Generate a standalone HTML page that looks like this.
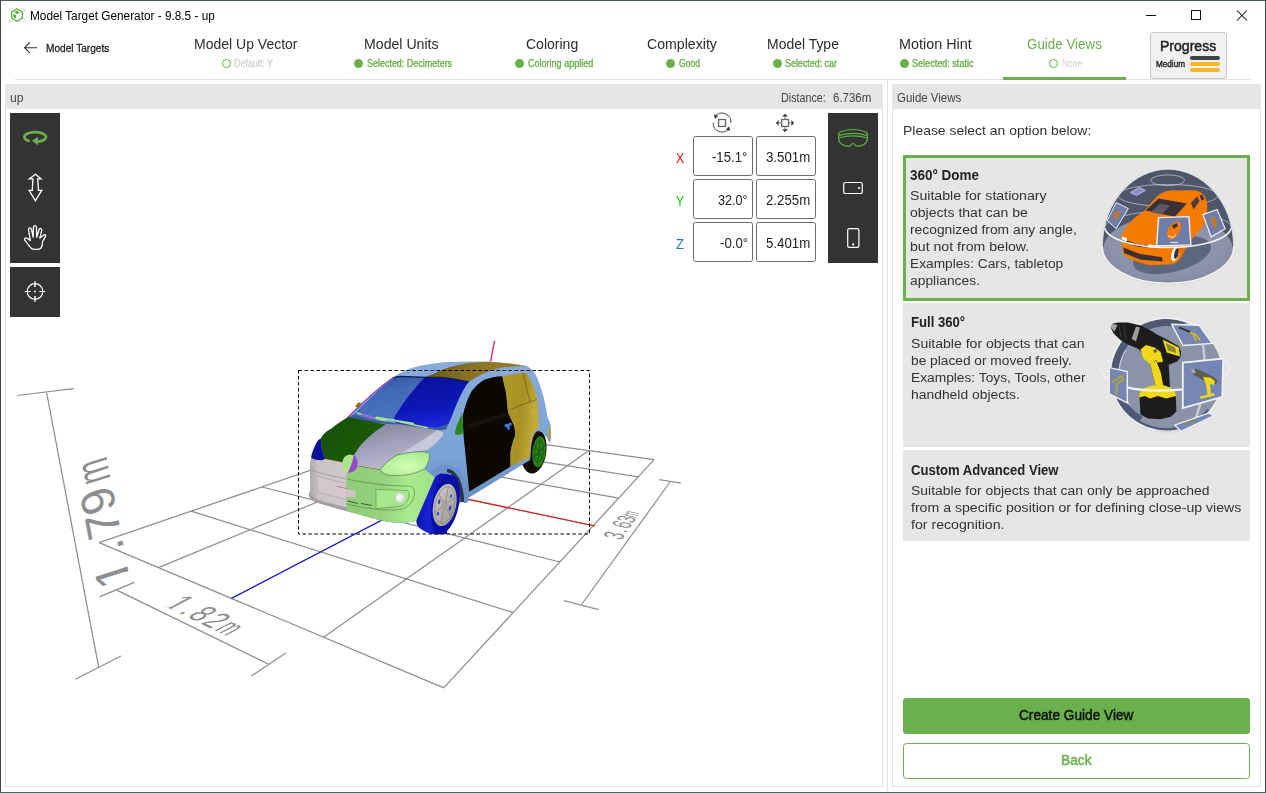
<!DOCTYPE html>
<html lang="en"><head><meta charset="utf-8"><title>Model Target Generator - 9.8.5 - up</title>
<style>
html,body{margin:0;padding:0;background:#fff;}
body{width:1266px;height:793px;overflow:hidden;font-family:"Liberation Sans",sans-serif;}
#win{position:relative;width:1266px;height:793px;overflow:hidden;background:#fff;}
#win>div,#win>svg,.t{position:absolute;}
.t{white-space:nowrap;transform-origin:0 0;display:block;}
.bd{background:#46525a;}
.hdr{background:#e6e6e5;}
.ln{background:#e2e2e2;}
.tb{background:#333333;}
.inp{border:1px solid #6a6a6a;border-radius:2.5px;box-sizing:border-box;background:#fff;}
.card{background:#e6e6e5;}
.dot{border-radius:50%;box-sizing:border-box;}
.dim{white-space:nowrap;font-family:"Liberation Sans",sans-serif;}
.dim i{position:absolute;background:#fff;display:block;}

</style></head>
<body>
<div id="win">
<!-- window border -->
<div class="bd" style="left:0;top:0;width:1266px;height:1px;background:#4a5860"></div>
<div class="bd" style="left:0;top:0;width:1px;height:793px;background:#3c4a44"></div>
<div class="bd" style="left:1265px;top:0;width:1px;height:793px;background:#2a5566"></div>
<div class="bd" style="left:0;top:792px;width:1266px;height:1px;background:#50606a"></div>
<!-- nav separator -->
<div class="ln" style="left:15px;top:79px;width:1236px;height:1px"></div>
<div style="left:1003px;top:77px;width:123px;height:3px;background:#6ab04c"></div>
<!-- progress button -->
<div style="left:1150px;top:32px;width:77px;height:47px;box-sizing:border-box;border:1px solid #c9c9c9;border-radius:3px;background:#f1f1f1"></div>
<div style="left:1190px;top:56px;width:30px;height:4px;border-radius:2px;background:#3c4043"></div>
<div style="left:1190px;top:62px;width:30px;height:4px;border-radius:2px;background:#fdb823"></div>
<div style="left:1190px;top:68px;width:30px;height:4px;border-radius:2px;background:#fdb823"></div>
<!-- status dots -->
<div class="dot" style="left:221.5px;top:59.3px;width:9px;height:9px;border:1.2px solid #6ab04c"></div>
<div class="dot" style="left:354.3px;top:59.3px;width:9px;height:9px;background:#6ab04c"></div>
<div class="dot" style="left:515px;top:59.3px;width:9px;height:9px;background:#6ab04c"></div>
<div class="dot" style="left:666px;top:59.3px;width:9px;height:9px;background:#6ab04c"></div>
<div class="dot" style="left:772.5px;top:59.3px;width:9px;height:9px;background:#6ab04c"></div>
<div class="dot" style="left:899.5px;top:59.3px;width:9px;height:9px;background:#6ab04c"></div>
<div class="dot" style="left:1049.4px;top:59.3px;width:9px;height:9px;border:1.2px solid #6ab04c"></div>
<!-- left panel -->
<div style="left:5px;top:84px;width:878px;height:703px;box-sizing:border-box;border:1px solid #e2e2e2;background:#fff"></div>
<div class="hdr" style="left:5px;top:84px;width:878px;height:25px"></div>
<!-- splitter -->
<div class="ln" style="left:887px;top:79px;width:1px;height:713px"></div>
<!-- right panel -->
<div style="left:892px;top:84px;width:369px;height:703px;box-sizing:border-box;border:1px solid #e2e2e2;background:#fff"></div>
<div class="hdr" style="left:892px;top:84px;width:369px;height:25px"></div>
<!-- toolbars -->
<div class="tb" style="left:10px;top:113px;width:50px;height:150px"></div>
<div class="tb" style="left:10px;top:267px;width:50px;height:50px"></div>
<div class="tb" style="left:828px;top:113px;width:50px;height:150px"></div>
<!-- inputs -->
<div class="inp" style="left:693px;top:136px;width:60px;height:40px"></div>
<div class="inp" style="left:756px;top:136px;width:60px;height:40px"></div>
<div class="inp" style="left:693px;top:179px;width:60px;height:40px"></div>
<div class="inp" style="left:756px;top:179px;width:60px;height:40px"></div>
<div class="inp" style="left:693px;top:222px;width:60px;height:40px"></div>
<div class="inp" style="left:756px;top:222px;width:60px;height:40px"></div>
<!-- cards -->
<div class="card" style="left:903px;top:155px;width:347px;height:146px;box-sizing:border-box;border:3px solid #6ab04c"></div>
<div class="card" style="left:903px;top:303px;width:347px;height:144px"></div>
<div class="card" style="left:903px;top:450px;width:347px;height:91px"></div>
<!-- buttons -->
<div style="left:903px;top:698px;width:347px;height:36px;border-radius:3px;background:#6ab04c"></div>
<div style="left:903px;top:743px;width:347px;height:36px;box-sizing:border-box;border:1.3px solid #6ab04c;border-radius:3.5px;background:#fff"></div>

<svg style="left:0;top:0" width="1266" height="793" viewBox="0 0 1266 793">
<defs>
<style>
.g{stroke:#8e8e8e;stroke-width:1.25;fill:none}
.bl{stroke:#1414e0;stroke-width:1.1;fill:none}
.rd{stroke:#e81818;stroke-width:1.1;fill:none}
.dt{font-family:"Liberation Sans",sans-serif;fill:#8e8e8e}
</style>
</defs>

<g id="grid">
<line class="g" x1="99.2" y1="542.6" x2="432.2" y2="428.7"/>
<line class="g" x1="158.4" y1="567.6" x2="479.0" y2="435.3"/>
<line class="g" x1="231.4" y1="598.4" x2="531.0" y2="442.5"/>
<line class="g" x1="323.5" y1="637.3" x2="588.9" y2="450.6"/>
<line class="g" x1="443.7" y1="687.9" x2="654.1" y2="459.7"/>
<line class="g" x1="99.2" y1="542.6" x2="443.7" y2="687.9"/>
<line class="g" x1="191.2" y1="511.1" x2="513.1" y2="612.6"/>
<line class="g" x1="261.9" y1="487.0" x2="559.8" y2="562.0"/>
<line class="g" x1="317.8" y1="467.8" x2="593.3" y2="525.6"/>
<line class="g" x1="363.1" y1="452.3" x2="618.6" y2="498.2"/>
<line class="g" x1="400.6" y1="439.5" x2="638.3" y2="476.8"/>
<line class="g" x1="432.2" y1="428.7" x2="654.1" y2="459.7"/>
<line class="bl" x1="231.4" y1="598.4" x2="435.0" y2="492.4"/>
<line class="rd" x1="435.0" y1="492.4" x2="595.2" y2="526.0"/>
<line class="g" x1="46.7" y1="393.0" x2="98.6" y2="666.8"/>
<line class="g" x1="17.0" y1="395.5" x2="73.6" y2="388.7"/>
<line class="g" x1="75.4" y1="679.3" x2="121.0" y2="656.0"/>
<line class="g" x1="117.3" y1="590.4" x2="268.3" y2="664.0"/>
<line class="g" x1="99.4" y1="596.9" x2="134.3" y2="582.4"/>
<line class="g" x1="251.4" y1="676.0" x2="285.8" y2="653.0"/>
<line class="g" x1="670.0" y1="482.0" x2="581.6" y2="604.5"/>
<line class="g" x1="659.2" y1="479.7" x2="681.0" y2="483.1"/>
<line class="g" x1="564.0" y1="600.7" x2="598.6" y2="609.7"/>
</g>
<g id="car">
<defs>
<linearGradient id="gBody" x1="0" y1="0" x2="0" y2="1"><stop offset="0" stop-color="#86acdc"/><stop offset="0.6" stop-color="#7aa2d4"/><stop offset="1" stop-color="#5a82b8"/></linearGradient>
<linearGradient id="gRoof" x1="0" y1="0" x2="1" y2="0"><stop offset="0" stop-color="#6e5a18"/><stop offset="0.5" stop-color="#8c7424"/><stop offset="1" stop-color="#9c842c"/></linearGradient>
<linearGradient id="gWsL" x1="0" y1="0" x2="0.3" y2="1"><stop offset="0" stop-color="#2f4f98"/><stop offset="0.4" stop-color="#4068b4"/><stop offset="1" stop-color="#4a74c0"/></linearGradient>
<linearGradient id="gWsR" x1="0" y1="0" x2="0.2" y2="1"><stop offset="0" stop-color="#08109a"/><stop offset="0.7" stop-color="#0c18b8"/><stop offset="1" stop-color="#1a28d8"/></linearGradient>
<linearGradient id="gHoodG" x1="0" y1="0" x2="1" y2="0.4"><stop offset="0" stop-color="#17500a"/><stop offset="1" stop-color="#1c5c06"/></linearGradient>
<linearGradient id="gHoodS" x1="0.2" y1="0" x2="0.6" y2="1"><stop offset="0" stop-color="#86869c"/><stop offset="0.5" stop-color="#a4a4bc"/><stop offset="1" stop-color="#c0c0d6"/></linearGradient>
<radialGradient id="gHL" cx="0.55" cy="0.6" r="0.7"><stop offset="0" stop-color="#d4ffb4"/><stop offset="1" stop-color="#a4e888"/></radialGradient>
<linearGradient id="gBumpG" x1="0" y1="0" x2="1" y2="0"><stop offset="0" stop-color="#8ecc78"/><stop offset="0.4" stop-color="#94d27c"/><stop offset="0.7" stop-color="#aaea8e"/><stop offset="1" stop-color="#a2e286"/></linearGradient>
<linearGradient id="gBumpS" x1="0" y1="0" x2="1" y2="0"><stop offset="0" stop-color="#a8a4a4"/><stop offset="0.25" stop-color="#cac4c4"/><stop offset="1" stop-color="#cfc7c7"/></linearGradient>
<linearGradient id="gYel" x1="0" y1="0" x2="1" y2="0.3"><stop offset="0" stop-color="#b09828"/><stop offset="0.6" stop-color="#a89024"/><stop offset="1" stop-color="#c4ac3c"/></linearGradient>
<linearGradient id="gTire" x1="0" y1="0" x2="1" y2="0"><stop offset="0" stop-color="#0c14b0"/><stop offset="0.35" stop-color="#1822d4"/><stop offset="0.8" stop-color="#0c12ac"/><stop offset="1" stop-color="#0a0e9c"/></linearGradient>
<linearGradient id="gRim" x1="0" y1="0" x2="1" y2="1"><stop offset="0" stop-color="#d0ccc8"/><stop offset="1" stop-color="#9c9894"/></linearGradient>
</defs>
<!-- antenna -->
<line x1="490.6" y1="361.5" x2="494.6" y2="340.7" stroke="#e03070" stroke-width="1.4"/>
<!-- rear wheel -->
<ellipse cx="533.6" cy="450.6" rx="12.8" ry="23" transform="rotate(6 533.6 450.6)" fill="#140c04"/>
<ellipse cx="539" cy="451.8" rx="6.6" ry="15.6" transform="rotate(6 539 451.8)" fill="#2a8418"/>
<g transform="rotate(6 539 451.8)" stroke="#165a0c" stroke-width="1" fill="none"><ellipse cx="539" cy="451.8" rx="4.4" ry="11"/><line x1="539" y1="438" x2="539" y2="466"/><line x1="533.6" y1="445" x2="544.4" y2="459"/><line x1="533.6" y1="459" x2="544.4" y2="445"/></g>
<!-- body silhouette -->
<path id="bodyPath" d="M348,417 Q370.4,393.6 393.6,377 C400,372.5 408,369 414.8,367 C425,364.5 436,363 448,362 L470,361.5 L490,361.7 L510,363.5 C518,364.5 524,365.3 527.4,366.3 C532,369 535,373 537.4,378 C540,385 542,391 543.6,397 L546,408 C546.8,412 547,415 547.4,417 C549,420 550,422 550.3,424.4 C551,428 551.2,432 551,436 C551,439 550.6,441 550,443 L547,438 C544,434 541,431 538,431 C534,432 531,440 530.5,457 L529.8,460.3 L461.2,502.2 L440,515 L416,521 C410,522.5 402,523 396,522.8 C390,522.2 383,521 377.4,519.6 L346.2,511 L315,502 C311,499 309,497 308.7,494.7 C310,492 310.6,489 310.6,486 L310,469.7 C310.2,465 310.6,461 311.2,457.2 C312,453 313.4,449 315,446 C316.6,442 318.6,439 320.6,438.7 C323,434 327,431 331.2,428.7 Z" fill="url(#gBody)"/>
<!-- fender shading -->
<path d="M428,480 C435,468 446,465 454,470.5 C461,476.5 465,489 465.5,500" stroke="#6c92c6" stroke-width="6" fill="none" stroke-linecap="round"/>
<path d="M447,470.5 C452,471 457,476 459.5,484 C461.5,490 462.4,496 462.4,502" stroke="#26344c" stroke-width="3.6" fill="none"/>
<!-- front wheel tire -->
<path d="M436,476 C429,485 423.5,498 419,512 C417,518 416.2,521 416.4,522.6 C417,526 420,529 422.8,530.2 C427,533 432,534.6 437.9,534.5 L447,534 L449,474 L440.5,473.6 Z" fill="url(#gTire)"/>
<ellipse cx="445.4" cy="504.3" rx="13.4" ry="30.2" transform="rotate(12 445.4 504.3)" fill="#0a10a6"/>
<!-- roof gold -->
<path d="M424.8,377 C432,374.5 436,372.5 440,370.7 C455,364.5 470,362 490,361.7 L510,363.5 L527.4,366.3 C518,366.3 510,367 502.4,367.6 C496,369 491,370.5 487.4,372 C480,375 474,378.5 470,381.3 C458,379.5 448,378 440,377 Z" fill="url(#gRoof)"/>
<!-- windshield -->
<path d="M353.5,415 Q372.6,394.6 393.6,377.5 C396,376.3 398,376 400,376 L424.8,377 C418,384 410,394 404,402 C400,408 396,414 393.6,418.5 L370,421.2 Z" fill="url(#gWsL)"/>
<path d="M424.8,377 L440,377 C450,378 460,379.6 469,381.5 C464,388 459,398 455,408 C453,414 451,419 448.6,423.7 C446,427 442,428.6 437.3,428.7 L397.4,424.3 L393.6,418.5 C396,414 400,408 404,402 C410,394 418,384 424.8,377 Z" fill="url(#gWsR)"/>
<!-- cowl -->
<path d="M349,417.2 L353.5,414.6 L370,419.6 L397.4,423.2 L437.3,427.6 L448.6,423.7 L446,429.5 L437.3,430.6 L397.4,425.4 L370,421.8 Z" fill="#3a5aa4"/>
<path d="M393.6,378 C396,376.6 398,376.4 400,376.4 L424.8,377.4 L440,377.4 C450,378.4 460,380 469,381.9" stroke="#101c50" stroke-width="1.2" fill="none"/>
<!-- A-pillar purple line -->
<path d="M347.6,417.8 Q370.4,394 393.6,377.2" stroke="#9a3cc8" stroke-width="1.4" fill="none"/>
<!-- wipers -->
<path d="M357,413 L372,417.5 L386,420.5 M376,417.2 L414,423.5 M396,421 L428,428" stroke="#a4e488" stroke-width="1.4" fill="none"/>
<path d="M361,414.5 L375,418.5 M398,424.5 L406,427" stroke="#b050d0" stroke-width="1.4" fill="none"/>
<!-- mirror left -->
<path d="M355,407 L358,402.5 L361,403 L359.5,407.5 Z" fill="#8c6c10"/>
<!-- hood green -->
<path d="M348,417 L370,421.2 L386,424.6 C380,428 375,432 370,436.2 C363,442 358,448 355,453.7 L352,456 C348,456.5 345,458.5 343,462.5 L325,459 L321.8,448.7 L320.6,438.7 C323,434 327,431 331.2,428.7 C337,424 343,420 348,417 Z" fill="url(#gHoodG)"/>
<!-- hood silver -->
<path d="M386,424.6 L397.4,424.3 L437.3,430 L443,432.5 C443.6,434 443,435.4 442.3,436.2 C438,441 433,446 427.3,450 C417,451 407,452.5 397.4,455 C390,459 384,464 380,470 L357.4,466.2 C358,461 357,457 355,453.7 C358,448 363,442 370,436.2 C375,432 380,428 386,424.6 Z" fill="url(#gHoodS)"/>
<path d="M437.3,430 L443,432.5 C443.6,434 443,435.4 442.3,436.2 C438,441 433,446 427.3,450 C417,451 407,452.5 399,454.5 C412,447 426,438 437.3,430 Z" fill="#c8c8dc"/>
<!-- hood front edge brown line -->
<path d="M325,459 L343,462.5 M357.4,466.2 L380,470" stroke="#8c5010" stroke-width="1" fill="none"/>
<!-- left headlight dark blue -->
<path d="M320.6,438.7 L321.8,448.7 L325.4,460.3 C321,461.2 316,460.6 313.6,459.6 C311.6,458.6 311,457.6 311.2,457.2 C312,453 313.4,449 315,446 C316.6,442 318.6,439 320.6,438.7 Z" fill="#0a1098"/>
<!-- bumper silver -->
<path d="M311.2,457.2 C313,459 316,460.4 322,460.3 L325,459 L343,462.5 L346.8,467 L346.8,511.2 L315,502 C311,499 309,497 308.7,494.7 C310,492 310.6,489 310.6,486 L310,469.7 C310.2,465 310.6,461 311.2,457.2 Z" fill="url(#gBumpS)"/>
<path d="M316,476 L346.8,483.5 L346.8,500 L318,492 Z" fill="#d2caca" stroke="#a8a0a0" stroke-width="0.6"/>
<path d="M310.5,470 C320,473 334,476.5 346.8,479" stroke="#9a9494" stroke-width="0.7" fill="none"/>
<path d="M309,493.4 C312,497 316,499.4 322,501.2 L346.8,507.4 L346.8,511.2 L315,502 C311,499 309,497 308.7,494.7 Z" fill="#a39f9f"/><path d="M336.3,486.3 L346.8,488.8 L346.8,497 L336.3,494.6 Z" fill="#d6c8cc"/><path d="M336.5,486.2 L346.8,488.6" stroke="#a04860" stroke-width="0.6"/>
<!-- bumper green -->
<path d="M346.8,467 L357.4,466.2 L380,470 L387.4,475 L406,475 L424.8,469.5 L434.8,477.4 L416,521 C410,522.5 402,523 396,522.8 C390,522.2 383,521 377.4,519.6 L346.8,511.2 Z" fill="url(#gBumpG)"/>
<path d="M346.8,479 C370,484 395,486.5 409,486 C413,486.5 414.5,489 414.5,493 C414,501 409,507 402,509 C390,512 366,508.5 346.8,504" stroke="#4a7a3c" stroke-width="0.6" fill="none"/>
<path d="M376,489.5 L407,490.5 C409,491 409.6,493 409,496 C408,502 404,505.5 399,506.5 L376,508.5 Z" fill="#a8e88c" stroke="#5a8a4a" stroke-width="0.6"/>
<path d="M346.8,489.7 L355.5,490.5 L355.5,497.5 L346.8,497 Z" fill="#d4c4c8"/>
<path d="M347.5,501 L358,503.5 M361,503.5 L372,505.5" stroke="#3c5a30" stroke-width="1" fill="none"/>
<circle cx="399.9" cy="497.8" r="4.6" fill="#e4e4f0"/>
<circle cx="399.2" cy="497" r="2.6" fill="#f6f6ff"/>
<!-- headlight right light green -->
<path d="M380,470 C384,464 390,459 397.4,455 C407,452.5 417,451.5 424.8,451.8 C428,452.5 429.8,453.5 429.8,455 C429.6,460 427.5,464.5 424.8,468.7 C419,472 412,474.2 406,475 C399,475.8 392,475.8 387.4,475 C384,474 381,472 380,470 Z" fill="url(#gHL)" stroke="#3c5a30" stroke-width="0.5"/>
<!-- emblem -->
<ellipse cx="349.8" cy="463.9" rx="7.6" ry="9.3" fill="#a8e888"/>
<path d="M353.7,455.4 C357,457.4 358.4,461.4 357.2,466.4 C356,470.4 352.6,473 347.6,472.8 C350.4,468 352.6,461 353.7,455.4 Z" fill="#9c44cc"/>
<!-- front wheel rim -->
<ellipse cx="444.7" cy="505" rx="11.4" ry="21.4" transform="rotate(12 444.7 505)" fill="url(#gRim)"/>
<g transform="rotate(12 444.7 505)" stroke="#8a8682" stroke-width="0.8" fill="none">
<ellipse cx="444.7" cy="505" rx="9.6" ry="18.8"/>
<line x1="444.7" y1="486" x2="444.7" y2="524"/><line x1="436" y1="495" x2="453.4" y2="515"/><line x1="436" y1="515" x2="453.4" y2="495"/>
</g>
<g transform="rotate(12 444.7 505)" fill="#2a48c8"><ellipse cx="438.6" cy="503" rx="1.2" ry="2.6"/><ellipse cx="450.6" cy="507" rx="1.2" ry="2.6"/><ellipse cx="440" cy="515" rx="1" ry="2"/><ellipse cx="449" cy="495" rx="1" ry="2"/></g>
<ellipse cx="444.7" cy="505" rx="3" ry="5.4" transform="rotate(12 444.7 505)" fill="#a4a09c"/>
<!-- door black -->
<path d="M463,414.4 C465,406 468,398 471.2,392 C474.5,387 479,383 483.7,380 C490,377.6 496,376.6 502.4,376.3 C503.5,382 505,388 506.2,393.2 L508,412 C510,417 512,421 513.7,424.4 C515,428 515.2,432 515,436 C513.5,440 511.5,446 510.5,452.2 L510.5,466.6 L469.3,491.6 C468,478 466,460 464.5,445 C463.3,434 462.6,424 463,414.4 Z" fill="#0c0800"/>
<path d="M467,424 L508,412 L508.4,416 L468,429 Z" fill="#15110b"/>
<!-- side indicator green -->
<path d="M462.4,413.6 C459,419 456,427 454.8,433 C455.6,435.4 458,435.8 463.4,433 Z" fill="#2a861a"/>
<!-- rear door yellow -->
<path d="M502.4,376.3 C510,374.6 518,373.2 526,372.6 C529,377 531.5,382 533.6,387 C535.4,391 536.6,395 537.4,399.4 L538.6,414.4 L538.7,428 C536,429.5 533.5,433 532,438 C530.8,444 530.2,451 529.8,457.2 L510.5,466.6 L510.5,452.2 C511.5,446 513.5,440 515,436 C515.2,432 515,428 513.7,424.4 C512,421 510,417 508,412 L506.2,393.2 C505,388 503.5,382 502.4,376.3 Z" fill="url(#gYel)"/>
<path d="M523,373.2 L530,402 M510,409.4 L536.7,399.4" stroke="#6c5c14" stroke-width="0.7" fill="none"/>
<path d="M531,411 l4,-1.2 l0.6,3.4 l-4,1.4 z" fill="none" stroke="#d8c050" stroke-width="0.6"/>
<!-- rear lamp yellow -->
<path d="M549.2,424 C550.6,428 551,433 550.6,438 L548.6,442 L548.4,430 Z" fill="#b8a030"/>
<!-- door handle -->
<path d="M504.5,424.5 L511.5,422.5 L512,425 L509.5,426.3 L510,429.5 L507.5,430 L507,427.2 L505,427.6 Z" fill="#3c78d8"/>
</g>

<rect x="298.5" y="370.5" width="291" height="163.5" fill="none" stroke="#000" stroke-width="1" stroke-dasharray="3.6 2.4"/>
</svg>
<div class="dim" style="left:0;top:0;font-size:46px;line-height:46px;color:#8e8e8e;transform-origin:0 38.94px;transform:translate(130.2px,543.16px) matrix(-0.186,-0.983,1.0,-0.317,0,0)">1<span style="margin-left:8px;">.</span><span style="margin-left:4px;">7</span><span style="margin-left:-1px;">9</span><span style="margin-left:4px;display:inline-block;transform:scaleX(0.63);transform-origin:0 50%;">m</span><i style="left:0.05em;top:0.765em;width:0.2em;height:0.1em"></i><i style="left:0.342em;top:0.765em;width:0.2em;height:0.1em"></i></div>
<div class="dim" style="left:0;top:0;font-size:34px;line-height:34px;color:#8e8e8e;transform-origin:0 28.78px;transform:translate(163.5px,576.52px) matrix(0.63,0.307,-0.92,0.487,0,0)">1<span style="margin-left:4px;">.</span><span style="margin-left:4px;">8</span><span style="margin-left:2.5px;">2</span><span style="margin-left:3px;display:inline-block;transform:scaleX(0.72);transform-origin:0 50%;">m</span><i style="left:0.05em;top:0.765em;width:0.2em;height:0.1em"></i><i style="left:0.342em;top:0.765em;width:0.2em;height:0.1em"></i></div>
<div class="dim" style="left:0;top:0;font-size:15px;line-height:15px;color:#8e8e8e;transform-origin:0 12.70px;transform:translate(620.6px,527.70px) matrix(0.506,-0.744,1.8,0.37,0,0)">3<span style="margin-left:1.5px;">.</span><span style="margin-left:1.2px;font-size:0.95em;">6</span><span style="margin-left:-0.3px;font-size:0.9em;">3</span><span style="margin-left:0px;font-size:0.84em;display:inline-block;transform:scaleX(0.67);transform-origin:0 50%;">m</span></div>
<svg style="left:0;top:0" width="1266" height="793" viewBox="0 0 1266 793">
<!-- app icon -->
<g transform="translate(0,-0.8)">
<g fill="none" stroke="#dcdcdc" stroke-width="1">
<path d="M9.5,12.5 V9.5 H12.5 M21.5,9.5 H24.5 V12.5 M24.5,19.5 V22.5 H21.5 M12.5,22.5 H9.5 V19.5"/>
</g>
<path d="M17,9.6 L22.4,12.7 V19 L17,22.1 L11.6,19 V12.7 Z" fill="#fff" stroke="#6ab04c" stroke-width="1.5" stroke-linejoin="round"/>
<path d="M17,11.6 L19.8,13.2 L17,14.9 L14.2,13.2 Z" fill="#4caa3a"/>
<path d="M13.4,14.6 L16,16.1 V19.4 L13.4,17.9 Z" fill="#4caa3a"/>
</g>
<!-- back arrow -->
<path d="M37,47.7 H24.6 M29.8,42.5 L24.6,47.7 L29.8,52.9" fill="none" stroke="#333" stroke-width="1.15"/>
<!-- window controls -->
<path d="M1146,15.5 H1156" stroke="#111" stroke-width="1"/>
<rect x="1191.5" y="10.5" width="9" height="9" fill="none" stroke="#111" stroke-width="1"/>
<path d="M1237,10.5 L1247,20.5 M1247,10.5 L1237,20.5" stroke="#111" stroke-width="1.05"/>
<!-- rotate (green) -->
<path d="M38,141.7 A10.8,4.9 0 1 0 29.7,141.2" fill="none" stroke="#6ab04c" stroke-width="2.7"/>
<path d="M31.9,140.8 L38.1,136.8 V145.2 Z" fill="#6ab04c"/>
<!-- up/down arrow -->
<path d="M35.4,174.3 L41,178.8 L37.7,178.8 L38.5,190.4 L41.7,190.4 L35.4,200.8 L29.1,190.4 L32.3,190.4 L32.9,178.8 L29.3,178.8 Z" fill="none" stroke="#fff" stroke-width="1.3" stroke-linejoin="miter"/>
<!-- hand -->
<path d="M30.3,240.6 L28.6,229.8 Q28.5,227.7 29.8,227.8 Q31.2,227.8 31.5,229.6 L33.2,237.2 L33.4,227.6 Q33.6,225.7 35,225.7 Q36.4,225.7 36.5,227.6 L36.7,237.2 L39,229.8 Q39.6,228.1 40.8,228.5 Q42,229 41.7,230.6 L39.8,238.2 L43.6,235 Q44.6,234.2 45.4,234.9 Q46,235.6 45.4,236.6 L42.6,241.5 L42,246 Q41,249.3 37.5,249.4 L34,249.4 Q31.8,249.2 30.6,247.6 L24.8,240.2 Q24,239 25,238.2 Q26,237.5 27.2,238.3 Z" fill="none" stroke="#fff" stroke-width="1.3" stroke-linejoin="round"/>
<!-- crosshair -->
<circle cx="35" cy="291.5" r="7.8" fill="none" stroke="#fff" stroke-width="1.2"/>
<path d="M24.8,291.5 H30.6 M39.4,291.5 H45.2" stroke="#fff" stroke-width="1"/>
<path d="M35,281.3 V287 M35,296 V301.8" stroke="#fff" stroke-width="1.5"/>
<rect x="34.2" y="290.7" width="1.6" height="1.6" fill="#fff"/>
<!-- rotate icon above inputs -->
<g fill="none" stroke="#333" stroke-width="0.9">
<path d="M715.2,116.4 A8.8,8.8 0 0 1 730.8,122.8"/>
<path d="M713.2,122.8 A8.8,8.8 0 0 0 728.6,129"/>
</g>
<path d="M714.2,114.8 L717.6,116 L715.2,118.4 Z M729.8,130.4 L726.4,129.4 L728.8,126.8 Z" fill="#333" stroke="#333" stroke-width="0.6"/>
<rect x="718.6" y="119.5" width="6.9" height="6.9" fill="none" stroke="#666" stroke-width="1.3"/>
<!-- move icon -->
<rect x="781.6" y="119.5" width="6.9" height="6.9" fill="none" stroke="#666" stroke-width="1.3"/>
<path d="M785,116.3 V119 M785,127 V129.6 M778.4,122.9 H781 M789,122.9 H791.6" stroke="#777" stroke-width="1"/>
<path d="M785,113.8 L787.9,116.5 H782.1 Z M785,132 L787.9,129.3 H782.1 Z M775.9,122.9 L778.6,120 V125.8 Z M794.1,122.9 L791.4,120 V125.8 Z" fill="#333"/>
<!-- hololens -->
<g fill="none" stroke="#5fb044" stroke-width="1.2" stroke-linejoin="round">
<path d="M838.6,135.4 Q838,133 841,131.8 Q853,127.2 865,131.8 Q868,133 867.4,135.4"/>
<path d="M838.6,135.6 Q853,131.2 867.4,135.6"/>
<path d="M838.6,138 Q853,133.6 867.4,138"/>
<path d="M838.6,135.4 V138.4 Q839,142.6 842,144.4 Q845.6,146.4 849.8,146.2 L852.2,143.8 Q853,143 853.8,143.8 L856.2,146.2 Q860.4,146.4 864,144.4 Q867,142.6 867.4,138.4 V135.4"/>
</g>
<!-- tablet / phone -->
<rect x="843.7" y="182.5" width="18.6" height="11" rx="1.6" fill="none" stroke="#fff" stroke-width="1.2"/>
<circle cx="859.1" cy="188" r="1.1" fill="#fff"/>
<rect x="847.7" y="228.7" width="11.2" height="18.6" rx="1.6" fill="none" stroke="#fff" stroke-width="1.2"/>
<circle cx="853.2" cy="244.4" r="1.1" fill="#fff"/>
</svg>

<svg style="left:0;top:0" width="1266" height="793" viewBox="0 0 1266 793">
<defs>
<clipPath id="domeClip"><path d="M1102.4,247 C1102.4,200 1135,169.2 1168,169.2 C1201,169.2 1233.6,200 1233.6,247 C1233.6,267 1204,283.2 1168,283.2 C1132,283.2 1102.4,267 1102.4,247 Z"/></clipPath>
<radialGradient id="gFloor" cx="0.5" cy="0.45" r="0.6"><stop offset="0" stop-color="#9aa2b6"/><stop offset="1" stop-color="#848ca2"/></radialGradient>
<radialGradient id="gSph" cx="0.5" cy="0.5" r="0.5"><stop offset="0" stop-color="#969eb2"/><stop offset="0.8" stop-color="#8890a6"/><stop offset="0.86" stop-color="#4c5874"/><stop offset="1" stop-color="#4c5874"/></radialGradient>
<filter id="soft" x="-10%" y="-10%" width="120%" height="120%"><feGaussianBlur stdDeviation="1.2"/></filter>
</defs>
<!-- ===== DOME ===== -->
<g id="dome">
<path d="M1102.4,247 C1102.4,200 1135,169.2 1168,169.2 C1201,169.2 1233.6,200 1233.6,247 C1233.6,267 1204,283.2 1168,283.2 C1132,283.2 1102.4,267 1102.4,247 Z" fill="#d8d8d8" filter="url(#soft)" transform="translate(0,1.5)"/>
<path d="M1102.4,247 C1102.4,200 1135,169.2 1168,169.2 C1201,169.2 1233.6,200 1233.6,247 C1233.6,267 1204,283.2 1168,283.2 C1132,283.2 1102.4,267 1102.4,247 Z" fill="#4e566a"/>
<g clip-path="url(#domeClip)">
<ellipse cx="1168" cy="249" rx="64.6" ry="33.4" fill="url(#gFloor)"/>
<ellipse cx="1172" cy="255" rx="40" ry="17" fill="#5c667c" transform="rotate(-14 1172 255)"/>
</g>
<!-- thin rings -->
<g fill="none" stroke="#c8ccd8" stroke-width="0.7">
<ellipse cx="1167.7" cy="180.3" rx="17" ry="5.4"/>
<ellipse cx="1167.7" cy="195.4" rx="50" ry="11"/>
<path d="M1104.4,228 A63.6,17 0 0 1 1231.6,228"/>
</g>
<!-- top small diamond -->
<path d="M1130.4,192.4 L1139.4,187.3 L1145.5,190.4 L1136.4,195.4 Z" fill="#8c8cd0" stroke="#e4e4f0" stroke-width="0.6"/>
<!-- left frame -->
<path d="M1116.2,202.5 L1128.3,208.5 L1116.2,228.7 L1107.2,220.6 Z" fill="#6e7ea8" stroke="#f0f0f4" stroke-width="1"/>
<ellipse cx="1117" cy="215" rx="2.6" ry="4.6" fill="#c07830" transform="rotate(25 1117 215)"/>
<!-- car -->
<path d="M1123.3,254.9 L1121.3,238 C1122,232 1128,223 1136.4,216.6 L1144.5,210.5 L1156.6,196.8 C1161,192.5 1166,190.6 1170.7,190.4 L1194.9,190.2 C1200,191 1203.4,193.4 1205,196.6 C1207,201 1207.6,206 1207.1,210.5 C1206.6,217 1205.4,222 1203,226.7 L1190.9,240 L1180,259 C1178,262.4 1174,264.4 1170,264.6 L1150.5,265.2 C1140,263 1130,259.4 1123.3,254.9 Z" fill="#f57a00"/>
<path d="M1145.5,210.5 L1158.6,198.4 L1186.9,203.5 L1174.8,216.8 Z" fill="#3c3038"/>
<path d="M1151,212 L1160,203.6 L1170,205.4 L1162,214.6 Z" fill="#5a5864"/>
<path d="M1190.9,203 L1197,196.6 L1199.6,201 L1193.6,209.6 Z M1199.4,195.2 L1202.4,194.6 L1204.4,199.4 L1201.4,200.4 Z" fill="#4a3a40"/>
<path d="M1123.4,247.4 L1140,254 L1162,257.2 L1162.6,261.6 L1140,259.4 L1124,253 Z" fill="#3c3038"/>
<path d="M1122,238.4 L1138,244.4 L1160,246.6 L1160,248.6 L1138,246.8 L1122,241 Z" fill="#3c3038"/>
<path d="M1122,236.6 L1127,238 L1127,241.4 L1122.2,240 Z M1148,244.6 L1160,245.4 L1161,248.4 L1148,247.6 Z" fill="#f4f4f4"/>
<ellipse cx="1175" cy="254" rx="3.6" ry="7.6" fill="#f0f0f0" transform="rotate(14 1175 254)"/>
<ellipse cx="1176.4" cy="253.6" rx="2" ry="5.4" fill="#3c3038" transform="rotate(14 1176.4 253.6)"/>
<path d="M1176.8,222 L1190.9,230 L1190.9,240 L1183,254 L1177,247 Z" fill="#e06c00"/>
<!-- front white ring -->
<path d="M1104.6,228 C1108,240 1136,247.4 1168,247.4 C1200,247.4 1228,240 1231.4,228" fill="none" stroke="#f4f4f6" stroke-width="1.6"/>
<!-- right frame -->
<path d="M1203,214.6 L1217.1,209.5 L1225.2,228.7 L1211.1,236.8 Z" fill="#6e7ea8" stroke="#f0f0f4" stroke-width="1.2"/>
<ellipse cx="1214" cy="222" rx="2.6" ry="6" fill="#c07830" transform="rotate(-14 1214 222)"/>
<!-- center frame -->
<path d="M1158.6,217.6 L1188.9,216.6 L1190.9,244.9 L1156.6,245.9 Z" fill="#6e7ea8" stroke="#f0f0f4" stroke-width="1.4"/>
<path d="M1167,233 C1167,228 1172,222.6 1177,221.4 C1180,221.4 1181.6,224 1181,227.6 C1180,233 1175,238.6 1170.6,239.6 C1168,239.4 1167,237 1167,233 Z" fill="#f57a00"/>
<path d="M1172,225.6 L1176.6,223 L1178,226 L1173.6,229 Z" fill="#3c3038"/>
<path d="M1168,235.6 L1173,238 L1175.6,234.6" fill="none" stroke="#f4f4f4" stroke-width="1"/>
<path d="M1170,242.4 H1178" stroke="#f4f4f4" stroke-width="1"/>
<!-- dome outline -->
<path d="M1102.4,247 C1102.4,200 1135,169.2 1168,169.2 C1201,169.2 1233.6,200 1233.6,247" fill="none" stroke="#dfe2ea" stroke-width="0.9"/>
<path d="M1102.4,247 C1102.4,267 1132,283.2 1168,283.2 C1204,283.2 1233.6,267 1233.6,247" fill="none" stroke="#f4f4f6" stroke-width="1.6"/>
</g>
<!-- ===== SPHERE / DRILL ===== -->
<g id="sphere">
<circle cx="1166.7" cy="376.5" r="56" fill="#d4d4d4" filter="url(#soft)"/>
<circle cx="1166.7" cy="374.7" r="55.5" fill="#8b93a9"/>
<path d="M1140.7,419.7 A52,52 0 0 1 1184.5,325.8" fill="none" stroke="#4c5874" stroke-width="7"/>
<path d="M1139.45,421.9 A54.5,54.5 0 0 0 1208.45,409.7" fill="none" stroke="#4c5874" stroke-width="2.2"/>
<path d="M1125.6,350 A47.5,47.5 0 0 0 1130,405" fill="none" stroke="#dfe2ea" stroke-width="0.9"/>
<circle cx="1166.7" cy="374.7" r="56.6" fill="none" stroke="#f2f2f4" stroke-width="1.2" stroke-dasharray="60 40 120 30 50 56"/>
<!-- back ring (sides only) -->
<path d="M1111,360.5 C1098,364 1098,374 1109.2,380" fill="none" stroke="#f2f2f4" stroke-width="1.1"/>
<path d="M1223,359 C1232,362 1232,372 1223,378" fill="none" stroke="#f2f2f4" stroke-width="1.1"/>
<!-- vertical band right -->
<path d="M1203,345 C1207,370 1204,400 1193,425" fill="none" stroke="#c8ccd6" stroke-width="2.4"/>
<!-- top-right frame -->
<path d="M1171.7,324.2 L1199,325.2 L1212.1,343.4 L1182.8,345.4 Z" fill="#7486b4" stroke="#f2f2f4" stroke-width="1.4"/>
<path d="M1180,328 L1196,335 L1200,340 M1193,333 L1196,341" stroke="#d8c020" stroke-width="1.6" fill="none"/>
<path d="M1179,327.4 L1190,332" stroke="#303030" stroke-width="2"/>
<!-- bottom frame -->
<path d="M1174.8,425.1 L1209.1,413 L1213.1,416 L1180.8,431.2 Z" fill="#7486b4" stroke="#f2f2f4" stroke-width="1.2"/>
<path d="M1184,424.4 L1198,419.4" stroke="#8c8c50" stroke-width="1.6"/>
<!-- left frame -->
<path d="M1109.2,367.6 L1127.3,371.6 L1127.3,402.9 L1109.2,393.8 Z" fill="#7486b4" stroke="#f2f2f4" stroke-width="1.4"/>
<path d="M1112,382 L1122,376 L1123,380 L1117,384 L1116,396" stroke="#a8a050" stroke-width="2.2" fill="none"/>
<!-- drill -->
<path d="M1110.6,327.6 L1113,323.6 L1118,322.6 L1128,322.4 L1140.5,325.4 L1150,330 L1157,334.6 L1168,340 L1179,346.4 L1181,352 L1180.4,357.6 L1177,361.4 L1169,364.8 L1160,364 L1150.5,361 L1144,355 L1138.4,349 L1128,344.4 L1121,340.4 L1114,334 Z" fill="#1c1c1c"/>
<path d="M1110.6,327.6 L1113,323.8 L1117.4,325 L1114.6,331.6 Z" fill="#a4a8a4"/>
<path d="M1131.6,339 L1136,326.4 L1140,327.6 L1136,341.4 Z" fill="#9ca09c"/>
<path d="M1119,325 L1121,337.6 M1124,324.6 L1126,340" stroke="#3c3c3c" stroke-width="1"/>
<path d="M1162.7,339.4 L1178.8,347.4 L1180,356.5 L1166.7,352.5 Z" fill="#f0d818"/>
<path d="M1165.6,342.8 L1175,347.4 L1176.4,353 L1168,350.4 Z" fill="#8c8430"/>
<path d="M1140.5,349.4 L1146,345 L1154.6,347.4 L1160.6,352 L1163,361 L1159,366 L1156,360 L1150.5,364.6 L1143.5,358.5 Z" fill="#f0d818"/>
<circle cx="1155.2" cy="351" r="1.7" fill="#5c5820"/>
<path d="M1150.5,364.6 L1160,362 L1168.7,364.6 L1170,387 L1156.6,388.8 L1153,376 Z" fill="#1c1c1c"/>
<path d="M1150.5,364.6 L1156,360.6 L1160.6,372 L1163.6,388 L1156.6,388.8 L1153,376 Z" fill="#f0d818"/>
<path d="M1139.4,394 C1141,388.6 1150,384.6 1160,385 C1169,385.4 1175,389.6 1175.8,394.9 L1176,400 L1139.4,400 Z" fill="#f0d818"/>
<path d="M1139.4,397.4 L1145,396 L1150,398.4 L1158,396 L1166,398.4 L1175.8,396 L1176.4,411.6 L1171,416.8 L1160,419.2 L1148,418.4 L1140.5,414.6 Z" fill="#1c1c1c"/>
<!-- front ring -->
<path d="M1127.3,387.4 C1140,390.6 1158,391.6 1183,389.4" fill="none" stroke="#f2f2f4" stroke-width="2.2"/>
<!-- right frame -->
<path d="M1182.8,362.6 L1223.2,358.5 L1222.2,396.9 L1182.8,408 Z" fill="#7486b4" stroke="#f2f2f4" stroke-width="1.8"/>
<path d="M1190.6,369.6 L1196,368.4 L1204,372 L1213,376.4 L1217.6,380.6 L1216,384 L1210,383 L1201,379 L1193,374.6 Z" fill="#5c5c54"/>
<path d="M1190.6,369.6 L1194,368.8 L1196,372.4 L1192.6,373.8 Z" fill="#a8aca8"/>
<path d="M1203,377 L1210,377.6 L1215,381 L1214,385 L1210,384 L1211,394 L1207.6,395 L1206,384 Z" fill="#f0d818"/>
<path d="M1200,396.6 L1214,393 L1214.4,395.4 L1200.4,399 Z" fill="#f0d818"/>
</g>
</svg>

<span class="t" style="left:29.6px;top:7.67px;font-size:12.5px;line-height:16px;font-weight:400;color:#000;transform:scaleX(0.9442);">Model Target Generator - 9.8.5 - up</span>
<span class="t" style="left:45.7px;top:41.36px;font-size:10.5px;line-height:14px;font-weight:400;color:#222;transform:scaleX(0.9625);-webkit-text-stroke:0.28px #222">Model Targets</span>
<span class="t" style="left:194.0px;top:34.00px;font-size:15px;line-height:20px;font-weight:400;color:#2b2b2b;transform:scaleX(0.9334);">Model Up Vector</span>
<span class="t" style="left:364.2px;top:34.00px;font-size:15px;line-height:20px;font-weight:400;color:#2b2b2b;transform:scaleX(0.9419);">Model Units</span>
<span class="t" style="left:526.2px;top:34.00px;font-size:15px;line-height:20px;font-weight:400;color:#2b2b2b;transform:scaleX(0.9342);">Coloring</span>
<span class="t" style="left:646.5px;top:34.00px;font-size:15px;line-height:20px;font-weight:400;color:#2b2b2b;transform:scaleX(0.9422);">Complexity</span>
<span class="t" style="left:767.3px;top:34.00px;font-size:15px;line-height:20px;font-weight:400;color:#2b2b2b;transform:scaleX(0.9304);">Model Type</span>
<span class="t" style="left:898.5px;top:34.00px;font-size:15px;line-height:20px;font-weight:400;color:#2b2b2b;transform:scaleX(0.9582);">Motion Hint</span>
<span class="t" style="left:1026.6px;top:34.00px;font-size:15px;line-height:20px;font-weight:400;color:#6ab04c;transform:scaleX(0.8923);">Guide Views</span>
<span class="t" style="left:234.0px;top:57.33px;font-size:10.3px;line-height:13px;font-weight:400;color:#d4d4d4;transform:scaleX(0.8661);-webkit-text-stroke:0.35px #d4d4d4">Default: Y</span>
<span class="t" style="left:367.2px;top:57.33px;font-size:10.3px;line-height:13px;font-weight:400;color:#6ab04c;transform:scaleX(0.8695);-webkit-text-stroke:0.35px #6ab04c">Selected: Decimeters</span>
<span class="t" style="left:527.7px;top:57.33px;font-size:10.3px;line-height:13px;font-weight:400;color:#6ab04c;transform:scaleX(0.8774);-webkit-text-stroke:0.35px #6ab04c">Coloring applied</span>
<span class="t" style="left:679.0px;top:57.33px;font-size:10.3px;line-height:13px;font-weight:400;color:#6ab04c;transform:scaleX(0.8332);-webkit-text-stroke:0.35px #6ab04c">Good</span>
<span class="t" style="left:785.0px;top:57.33px;font-size:10.3px;line-height:13px;font-weight:400;color:#6ab04c;transform:scaleX(0.8651);-webkit-text-stroke:0.35px #6ab04c">Selected: car</span>
<span class="t" style="left:912.0px;top:57.33px;font-size:10.3px;line-height:13px;font-weight:400;color:#6ab04c;transform:scaleX(0.8807);-webkit-text-stroke:0.35px #6ab04c">Selected: static</span>
<span class="t" style="left:1062.3px;top:57.33px;font-size:10.3px;line-height:13px;font-weight:400;color:#d0d0d0;transform:scaleX(0.8203);">None</span>
<span class="t" style="left:1160.4px;top:35.80px;font-size:15px;line-height:20px;font-weight:400;color:#222;transform:scaleX(0.9362);-webkit-text-stroke:0.5px #222">Progress</span>
<span class="t" style="left:1156.0px;top:58.89px;font-size:8.7px;line-height:11px;font-weight:400;color:#111;transform:scaleX(0.9383);-webkit-text-stroke:0.3px #111">Medium</span>
<span class="t" style="left:10.2px;top:89.67px;font-size:12.5px;line-height:16px;font-weight:400;color:#444;transform:scaleX(0.9708);">up</span>
<span class="t" style="left:780.5px;top:89.67px;font-size:12.5px;line-height:16px;font-weight:400;color:#444;transform:scaleX(0.8597);">Distance:</span>
<span class="t" style="left:833.2px;top:89.67px;font-size:12.5px;line-height:16px;font-weight:400;color:#444;transform:scaleX(0.9184);">6.736m</span>
<span class="t" style="left:897.4px;top:89.67px;font-size:12.5px;line-height:16px;font-weight:400;color:#444;transform:scaleX(0.9192);">Guide Views</span>
<span class="t" style="left:675.8px;top:149.15px;font-size:14px;line-height:18px;font-weight:400;color:#e81010;transform:scaleX(0.8776);">X</span>
<span class="t" style="left:676.0px;top:192.15px;font-size:14px;line-height:18px;font-weight:400;color:#10c010;transform:scaleX(0.8562);">Y</span>
<span class="t" style="left:676.0px;top:235.15px;font-size:14px;line-height:18px;font-weight:400;color:#1078d8;transform:scaleX(0.9343);">Z</span>
<span class="t" style="left:712.4px;top:148.15px;font-size:14px;line-height:18px;font-weight:400;color:#222;transform:scaleX(0.9383);">-15.1°</span>
<span class="t" style="left:718.0px;top:191.15px;font-size:14px;line-height:18px;font-weight:400;color:#222;transform:scaleX(0.9008);">32.0°</span>
<span class="t" style="left:719.5px;top:234.15px;font-size:14px;line-height:18px;font-weight:400;color:#222;transform:scaleX(0.9450);">-0.0°</span>
<span class="t" style="left:766.2px;top:148.15px;font-size:14px;line-height:18px;font-weight:400;color:#222;transform:scaleX(0.9464);">3.501m</span>
<span class="t" style="left:766.2px;top:191.15px;font-size:14px;line-height:18px;font-weight:400;color:#222;transform:scaleX(0.9464);">2.255m</span>
<span class="t" style="left:766.2px;top:234.15px;font-size:14px;line-height:18px;font-weight:400;color:#222;transform:scaleX(0.9464);">5.401m</span>
<span class="t" style="left:903.4px;top:122.09px;font-size:13.6px;line-height:18px;font-weight:400;color:#333;transform:scaleX(1.0254);">Please select an option below:</span>
<span class="t" style="left:910.2px;top:166.05px;font-size:14.0px;line-height:18px;font-weight:700;color:#222;transform:scaleX(0.9617);">360° Dome</span>
<span class="t" style="left:910.2px;top:187.35px;font-size:13.7px;line-height:18px;font-weight:400;color:#333;transform:scaleX(1.0318);">Suitable for stationary</span>
<span class="t" style="left:910.2px;top:204.35px;font-size:13.7px;line-height:18px;font-weight:400;color:#333;transform:scaleX(1.0261);">objects that can be</span>
<span class="t" style="left:910.2px;top:221.35px;font-size:13.7px;line-height:18px;font-weight:400;color:#333;transform:scaleX(1.0102);">recognized from any angle,</span>
<span class="t" style="left:910.2px;top:238.35px;font-size:13.7px;line-height:18px;font-weight:400;color:#333;transform:scaleX(1.0306);">but not from below.</span>
<span class="t" style="left:910.2px;top:255.35px;font-size:13.7px;line-height:18px;font-weight:400;color:#333;transform:scaleX(1.0018);">Examples: Cars, tabletop</span>
<span class="t" style="left:910.2px;top:272.35px;font-size:13.7px;line-height:18px;font-weight:400;color:#333;transform:scaleX(1.0108);">appliances.</span>
<span class="t" style="left:910.5px;top:313.15px;font-size:14.0px;line-height:18px;font-weight:700;color:#222;transform:scaleX(0.9371);">Full 360°</span>
<span class="t" style="left:910.5px;top:334.85px;font-size:13.7px;line-height:18px;font-weight:400;color:#333;transform:scaleX(1.0271);">Suitable for objects that can</span>
<span class="t" style="left:910.5px;top:351.85px;font-size:13.7px;line-height:18px;font-weight:400;color:#333;transform:scaleX(1.0026);">be placed or moved freely.</span>
<span class="t" style="left:910.5px;top:368.85px;font-size:13.7px;line-height:18px;font-weight:400;color:#333;transform:scaleX(1.0045);">Examples: Toys, Tools, other</span>
<span class="t" style="left:910.5px;top:385.85px;font-size:13.7px;line-height:18px;font-weight:400;color:#333;transform:scaleX(1.0148);">handheld objects.</span>
<span class="t" style="left:910.5px;top:461.35px;font-size:14.0px;line-height:18px;font-weight:700;color:#222;transform:scaleX(0.9339);">Custom Advanced View</span>
<span class="t" style="left:910.5px;top:481.95px;font-size:13.7px;line-height:18px;font-weight:400;color:#333;transform:scaleX(1.0189);">Suitable for objects that can only be approached</span>
<span class="t" style="left:910.5px;top:498.95px;font-size:13.7px;line-height:18px;font-weight:400;color:#333;transform:scaleX(1.0313);">from a specific position or for defining close-up views</span>
<span class="t" style="left:910.5px;top:515.95px;font-size:13.7px;line-height:18px;font-weight:400;color:#333;transform:scaleX(1.0326);">for recognition.</span>
<span class="t" style="left:1019.3px;top:706.17px;font-size:14.8px;line-height:19px;font-weight:400;color:#111;transform:scaleX(0.9230);-webkit-text-stroke:0.5px #111">Create Guide View</span>
<span class="t" style="left:1061.4px;top:750.67px;font-size:14.8px;line-height:19px;font-weight:400;color:#6ab04c;transform:scaleX(0.9269);-webkit-text-stroke:0.5px #6ab04c">Back</span>
</div>
</body></html>
